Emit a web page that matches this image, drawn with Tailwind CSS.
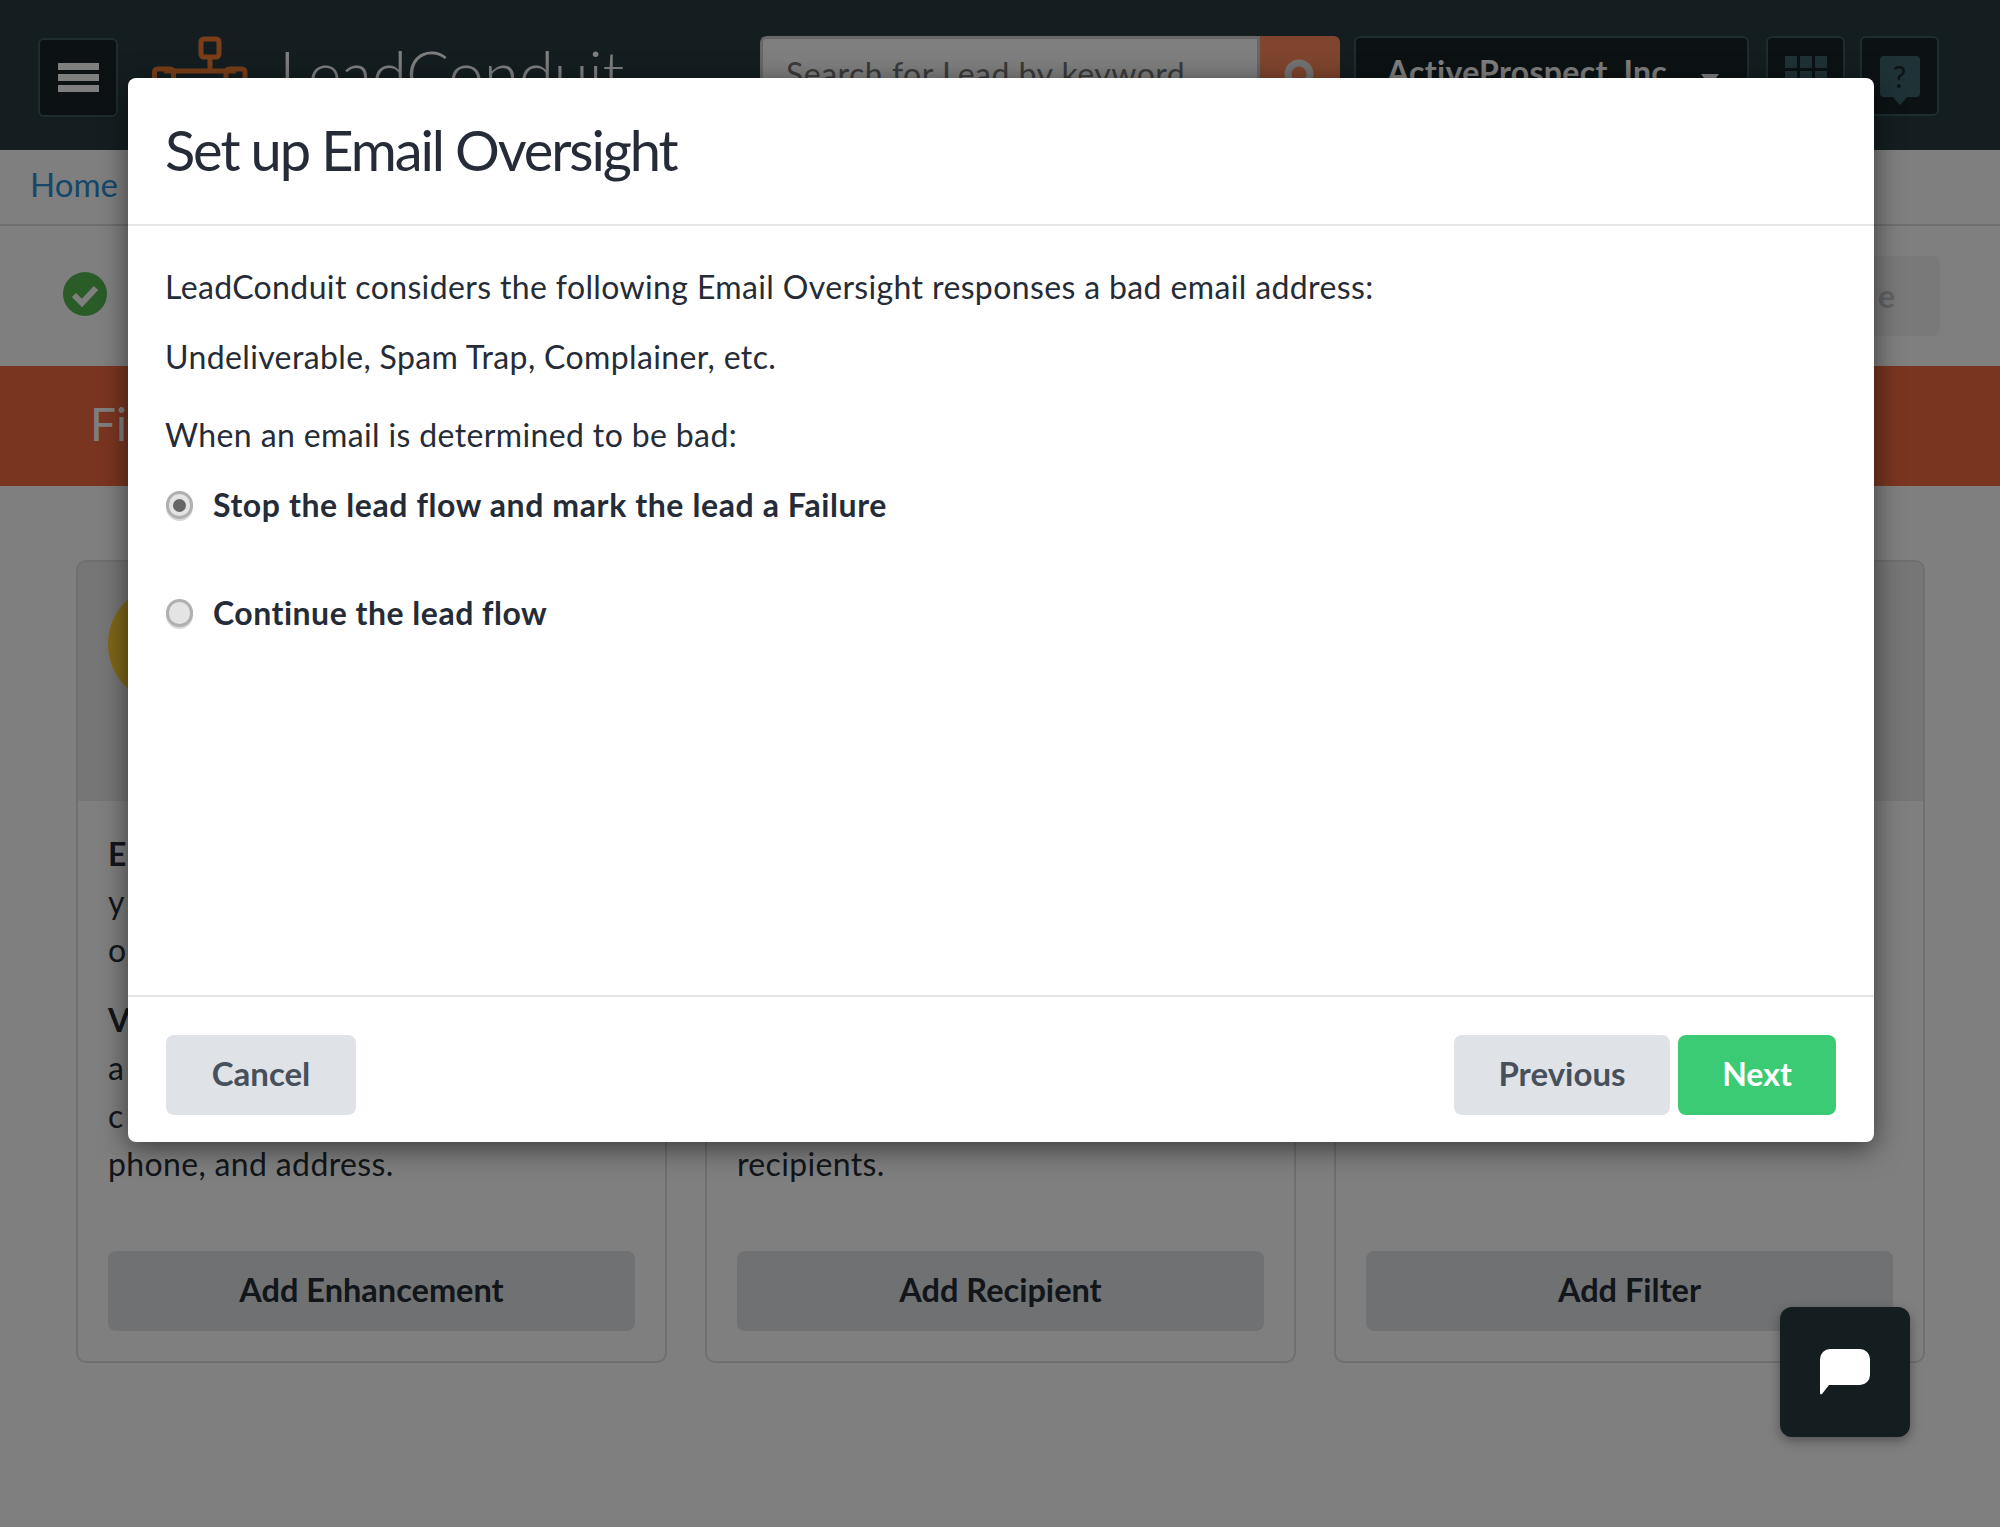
<!DOCTYPE html>
<html lang="en">
<head>
<meta charset="utf-8">
<title>Set up Email Oversight</title>
<script src="https://cdn.jsdelivr.net/npm/@tailwindcss/browser@4"></script>
</head>
<body class="bg-white font-['Lato','Liberation_Sans',sans-serif] text-[#252c37]">
<div class="relative w-[2000px] h-[1527px] overflow-hidden">

  <!-- page -->
  <header class="h-[150px] bg-[#283c40] flex items-start pt-[36px] pl-[38px]">
    <button class="mt-[2px] w-[80px] h-[79px] rounded-[6px] border-2 border-[#3a5a60] bg-[#182428] flex flex-col items-center justify-center gap-[4px]">
      <span class="block w-[41px] h-[7px] bg-white"></span>
      <span class="block w-[41px] h-[7px] bg-white"></span>
      <span class="block w-[41px] h-[7px] bg-white"></span>
    </button>
    <svg class="ml-[34px] w-[96px] h-[60px]" viewBox="0 0 96 60" fill="none" stroke="#f57e30" stroke-width="5">
      <rect x="49" y="3" width="18" height="18" rx="3"/>
      <path d="M58 21V35M12 35H84M24 35H72"/>
      <rect x="2.500" y="33" width="19" height="24" rx="3"/>
      <rect x="74" y="33" width="19" height="24" rx="3"/>
    </svg>
    <span class="ml-[31px] -mt-[3px] w-[350px] text-[64px] leading-[80px] font-light text-white tracking-[-0.3px] whitespace-nowrap">LeadConduit</span>
    <div class="ml-[131px] flex w-[580px] h-[80px] rounded-[6px] overflow-hidden">
      <div class="flex-1 bg-white border-[3px] border-[#cfcfcf] rounded-l-[6px] pl-[23px] pt-[15px] text-[32px] leading-[40px] text-[#777] tracking-[0.5px] whitespace-nowrap">Search for Lead by keyword</div>
      <div class="w-[80px] bg-[#ff8a5c] flex justify-center pt-[22px]">
        <svg class="w-[36px] h-[50px]" viewBox="0 0 36 50" fill="none" stroke="#e6e6e6" stroke-width="7"><circle cx="17" cy="16" r="11"/><path d="M17 27V50"/></svg>
      </div>
    </div>
    <button class="ml-[14px] w-[395px] h-[80px] rounded-[6px] border-2 border-[#3a5a60] bg-[#182428] flex items-start pl-[31px] pt-[14px] text-white text-[32px] leading-[40px] font-bold tracking-[0.3px] whitespace-nowrap">
      <span>ActiveProspect, Inc</span>
      <span class="ml-[34px] mt-[22px] w-0 h-0 border-l-[9px] border-r-[9px] border-t-[12px] border-l-transparent border-r-transparent border-t-white"></span>
    </button>
    <button class="ml-[17px] w-[79px] h-[80px] rounded-[6px] border-2 border-[#3a5a60] bg-[#182428] flex justify-center pt-[18px]">
      <svg class="w-[42px] h-[42px]" viewBox="0 0 42 42" fill="#3f646c"><rect width="12" height="12"/><rect x="15" width="12" height="12"/><rect x="30" width="12" height="12"/><rect y="15" width="12" height="12"/><rect x="15" y="15" width="12" height="12"/><rect x="30" y="15" width="12" height="12"/><rect y="30" width="12" height="12"/><rect x="15" y="30" width="12" height="12"/><rect x="30" y="30" width="12" height="12"/></svg>
    </button>
    <button class="ml-[15px] w-[79px] h-[80px] rounded-[6px] border-2 border-[#3a5a60] bg-[#182428] flex justify-center pt-[18px] relative">
      <span class="block w-[40px] h-[41px] rounded-[4px] bg-[#3f646c] text-[#182428] text-[30px] leading-[41px] text-center">?</span>
      <span class="absolute left-[30px] top-[58px] w-0 h-0 border-l-[8px] border-r-[8px] border-t-[9px] border-l-transparent border-r-transparent border-t-[#3f646c]"></span>
    </button>
  </header>

  <nav class="h-[76px] border-b-2 border-[#dcdcdc] pl-[30px] pt-[14px] text-[33px] leading-[40px] text-[#2d8fd5]">Home</nav>

  <div class="h-[140px] pl-[63px] pr-[60px] flex items-center justify-between">
    <svg class="w-[44px] h-[44px] -mt-[5px]" viewBox="0 0 44 44"><circle cx="22" cy="22" r="22" fill="#54b84f"/><path d="M11 23l8 8 14-15" fill="none" stroke="#fff" stroke-width="6"/></svg>
    <button class="w-[200px] h-[80px] -mt-[1px] rounded-[8px] bg-[#f2f3f5] text-right pr-[41px] text-[32px] font-bold tracking-[4px] text-[#c0c6ce]">Save</button>
  </div>

  <div class="h-[120px] bg-[#f46a41] pl-[90px] pb-[6px] flex items-center text-[46px] font-normal text-white">Fi</div>

  <main class="grid grid-cols-3 gap-x-[38px] pl-[76px] pr-[75px] pt-[74px]">
    <section class="h-[803px] rounded-[10px] border-2 border-[#dedede] flex flex-col overflow-hidden">
      <div class="h-[239px] bg-[#ecedef] pl-[30px] pt-[22px]"><div class="w-[120px] h-[120px] rounded-full bg-[#ffd030]"></div></div>
      <div class="flex-1 px-[30px] pt-[29px] pb-[30px] flex flex-col text-[32px] tracking-[0.35px] leading-[48px]">
        <p class="font-bold">E</p><p>y</p><p>o</p>
        <p class="font-bold mt-[22px]">V</p><p>a</p><p>c</p><p>phone, and address.</p>
        <button class="mt-auto h-[80px] pb-[2px] rounded-[8px] bg-[#dfe3e7] font-bold text-[32.500px] tracking-normal">Add Enhancement</button>
      </div>
    </section>
    <section class="h-[803px] rounded-[10px] border-2 border-[#dedede] flex flex-col overflow-hidden">
      <div class="h-[239px] bg-[#ecedef]"></div>
      <div class="flex-1 px-[30px] pt-[339px] pb-[30px] flex flex-col text-[32px] tracking-[0.35px] leading-[48px]">
        <p>recipients.</p>
        <button class="mt-auto h-[80px] pb-[2px] rounded-[8px] bg-[#dfe3e7] font-bold text-[32.500px] tracking-normal">Add Recipient</button>
      </div>
    </section>
    <section class="h-[803px] rounded-[10px] border-2 border-[#dedede] flex flex-col overflow-hidden">
      <div class="h-[239px] bg-[#ecedef]"></div>
      <div class="flex-1 px-[30px] pb-[30px] flex flex-col text-[32px] leading-[48px]">
        <button class="mt-auto h-[80px] pb-[2px] rounded-[8px] bg-[#dfe3e7] font-bold text-[32.500px]">Add Filter</button>
      </div>
    </section>
  </main>

  <!-- overlay -->
  <div class="absolute inset-0 bg-black/50"></div>

  <!-- modal -->
  <div class="absolute left-[128px] top-[78px] w-[1746px] h-[1064px] bg-white rounded-[8px] shadow-[0_6px_28px_rgba(0,0,0,0.55)] flex flex-col">
    <div class="h-[148px] border-b-2 border-[#e5e5e5] pl-[37px] pt-[40px] text-[56px] leading-[64px] text-[#252c37] tracking-[-2.1px] whitespace-nowrap">Set up Email Oversight</div>
    <div class="flex-1 pl-[37px] pt-[37px] text-[32px] leading-[48px] tracking-[0.37px]">
      <p>LeadConduit considers the following Email Oversight responses a bad email address:</p>
      <p class="mt-[22px]">Undeliverable, Spam Trap, Complainer, etc.</p>
      <p class="mt-[30px]">When an email is determined to be bad:</p>
      <label class="mt-[22px] flex items-center gap-[20px] font-bold h-[48px] tracking-[0.6px]">
        <span class="ml-[1px] w-[27px] h-[28px] rounded-full border-[3px] border-[#b0b0b0] bg-[#e4e4e4] shadow-[0_2px_0_#d8d8d8] flex items-center justify-center"><span class="block w-[13px] h-[13px] rounded-full bg-[#666]"></span></span>
        Stop the lead flow and mark the lead a Failure
      </label>
      <label class="mt-[60px] flex items-center gap-[20px] font-bold h-[48px] tracking-[0.5px]">
        <span class="ml-[1px] w-[27px] h-[28px] rounded-full border-[3px] border-[#b0b0b0] bg-[#e4e4e4] shadow-[0_2px_0_#d8d8d8]"></span>
        Continue the lead flow
      </label>
    </div>
    <div class="h-[147px] border-t-2 border-[#e5e5e5] px-[38px] pt-[38px] flex">
      <button class="w-[190px] h-[80px] pb-[2px] rounded-[8px] bg-[#dfe3e7] text-[#47505b] font-bold text-[33px]">Cancel</button>
      <button class="ml-auto w-[216px] h-[80px] pb-[2px] rounded-[8px] bg-[#dfe3e7] text-[#47505b] font-bold text-[33px]">Previous</button>
      <button class="ml-[8px] w-[158px] h-[80px] pb-[2px] rounded-[8px] bg-[#3acb74] text-white font-bold text-[32px]">Next</button>
    </div>
  </div>

  <!-- chat launcher -->
  <button class="absolute left-[1780px] top-[1307px] w-[130px] h-[130px] rounded-[12px] bg-[#141e20] shadow-[0_4px_12px_rgba(0,0,0,0.35)] flex items-center justify-center">
    <svg class="w-[50px] h-[46px]" viewBox="0 0 50 46"><path d="M10 0H40A10 10 0 0 1 50 10V26A10 10 0 0 1 40 36H9L2 45Q0 46 0 44V10A10 10 0 0 1 10 0Z" fill="#fff"/></svg>
  </button>
</div>
</body>
</html>
